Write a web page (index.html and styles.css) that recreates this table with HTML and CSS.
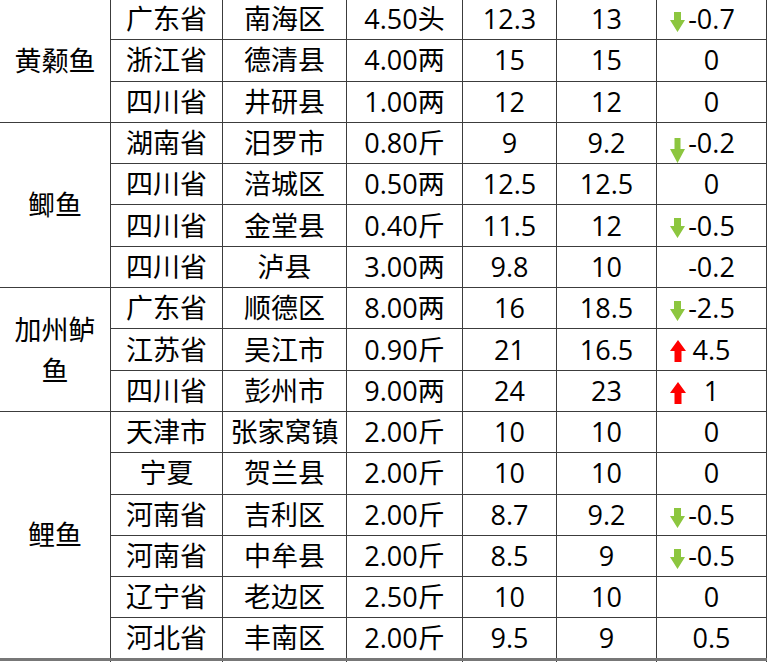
FILE: index.html
```html
<!DOCTYPE html>
<html lang="zh-CN">
<head>
<meta charset="utf-8">
<title>鱼价表</title>
<link rel="stylesheet" href="styles.css">
</head>
<body>
<table class="sheet">
  <colgroup>
    <col class="c1"><col class="c2"><col class="c3"><col class="c4"><col class="c5"><col class="c6"><col class="c7">
  </colgroup>
  <tbody>
    <tr class="grp">
      <td class="fish" rowspan="3">黄颡鱼</td>
      <td>广东省</td><td>南海区</td><td>4.50头</td><td>12.3</td><td>13</td>
      <td class="chg"><svg class="arr down" viewBox="0 0 15 20"><path d="M4 0H11V8H15L7.5 20L0 8H4Z"/></svg>-0.7</td>
    </tr>
    <tr><td>浙江省</td><td>德清县</td><td>4.00两</td><td>15</td><td>15</td><td class="chg">0</td></tr>
    <tr><td>四川省</td><td>井研县</td><td>1.00两</td><td>12</td><td>12</td><td class="chg">0</td></tr>

    <tr class="grp">
      <td class="fish" rowspan="4">鲫鱼</td>
      <td>湖南省</td><td>汨罗市</td><td>0.80斤</td><td>9</td><td>9.2</td>
      <td class="chg"><svg class="arr down tall" viewBox="0 0 15 25"><path d="M4.5 0H10.5V11H15L7.5 25L0 11H4.5Z"/></svg>-0.2</td>
    </tr>
    <tr><td>四川省</td><td>涪城区</td><td>0.50两</td><td>12.5</td><td>12.5</td><td class="chg">0</td></tr>
    <tr>
      <td>四川省</td><td>金堂县</td><td>0.40斤</td><td>11.5</td><td>12</td>
      <td class="chg"><svg class="arr down" viewBox="0 0 15 20"><path d="M4 0H11V8H15L7.5 20L0 8H4Z"/></svg>-0.5</td>
    </tr>
    <tr><td>四川省</td><td>泸县</td><td>3.00两</td><td>9.8</td><td>10</td><td class="chg">-0.2</td></tr>

    <tr class="grp">
      <td class="fish" rowspan="3">加州鲈鱼</td>
      <td>广东省</td><td>顺德区</td><td>8.00两</td><td>16</td><td>18.5</td>
      <td class="chg"><svg class="arr down" viewBox="0 0 15 20"><path d="M4 0H11V8H15L7.5 20L0 8H4Z"/></svg>-2.5</td>
    </tr>
    <tr>
      <td>江苏省</td><td>吴江市</td><td>0.90斤</td><td>21</td><td>16.5</td>
      <td class="chg"><svg class="arr up" viewBox="0 0 16 22"><path d="M8 0L16 11H11.5V22H4.5V11H0Z"/></svg>4.5</td>
    </tr>
    <tr>
      <td>四川省</td><td>彭州市</td><td>9.00两</td><td>24</td><td>23</td>
      <td class="chg"><svg class="arr up" viewBox="0 0 16 22"><path d="M8 0L16 11H11.5V22H4.5V11H0Z"/></svg>1</td>
    </tr>

    <tr class="grp">
      <td class="fish" rowspan="6">鲤鱼</td>
      <td>天津市</td><td>张家窝镇</td><td>2.00斤</td><td>10</td><td>10</td><td class="chg">0</td>
    </tr>
    <tr><td>宁夏</td><td>贺兰县</td><td>2.00斤</td><td>10</td><td>10</td><td class="chg">0</td></tr>
    <tr>
      <td>河南省</td><td>吉利区</td><td>2.00斤</td><td>8.7</td><td>9.2</td>
      <td class="chg"><svg class="arr down" viewBox="0 0 15 20"><path d="M4 0H11V8H15L7.5 20L0 8H4Z"/></svg>-0.5</td>
    </tr>
    <tr>
      <td>河南省</td><td>中牟县</td><td>2.00斤</td><td>8.5</td><td>9</td>
      <td class="chg"><svg class="arr down" viewBox="0 0 15 20"><path d="M4 0H11V8H15L7.5 20L0 8H4Z"/></svg>-0.5</td>
    </tr>
    <tr><td>辽宁省</td><td>老边区</td><td>2.50斤</td><td>10</td><td>10</td><td class="chg">0</td></tr>
    <tr><td>河北省</td><td>丰南区</td><td>2.00斤</td><td>9.5</td><td>9</td><td class="chg">0.5</td></tr>

    <tr class="next"><td></td><td></td><td></td><td></td><td></td><td></td><td></td></tr>
  </tbody>
</table>
</body>
</html>
```

FILE: styles.css
```css
html, body {
  margin: 0;
  padding: 0;
  background: #ffffff;
  overflow: hidden;
}

.sheet {
  border-collapse: collapse;
  table-layout: fixed;
  width: 768px;
  margin: -2px 0 0 -1px;
  font-family: "Open Sans", "Noto Sans CJK SC", sans-serif;
  font-size: 27px;
  color: #000000;
}

.c1 { width: 111px; }
.c2 { width: 112px; }
.c3 { width: 124px; }
.c4 { width: 116px; }
.c5 { width: 94px; }
.c6 { width: 100px; }
.c7 { width: 110px; }

.sheet td {
  border: 1px solid #3c3c3c;
  height: 41.3px;
  padding: 0;
  text-align: center;
  vertical-align: middle;
  line-height: 30px;
  white-space: nowrap;
  box-sizing: border-box;
}

.sheet td.fish {
  white-space: normal;
  line-height: 41px;
  padding: 0 4px;
}

.sheet td.chg {
  position: relative;
}

.arr {
  position: absolute;
  left: 13px;
  top: 13px;
  width: 15px;
  height: 20px;
}

.arr.down path { fill: #8cc63f; }
.arr.up path { fill: #ff0000; }

.arr.tall {
  top: 15px;
  height: 25px;
}

.arr.up {
  top: 11px;
  width: 16px;
  height: 22px;
}

.sheet tr.next td {
  border-top: 3px solid #777777;
  height: 20px;
}
```
